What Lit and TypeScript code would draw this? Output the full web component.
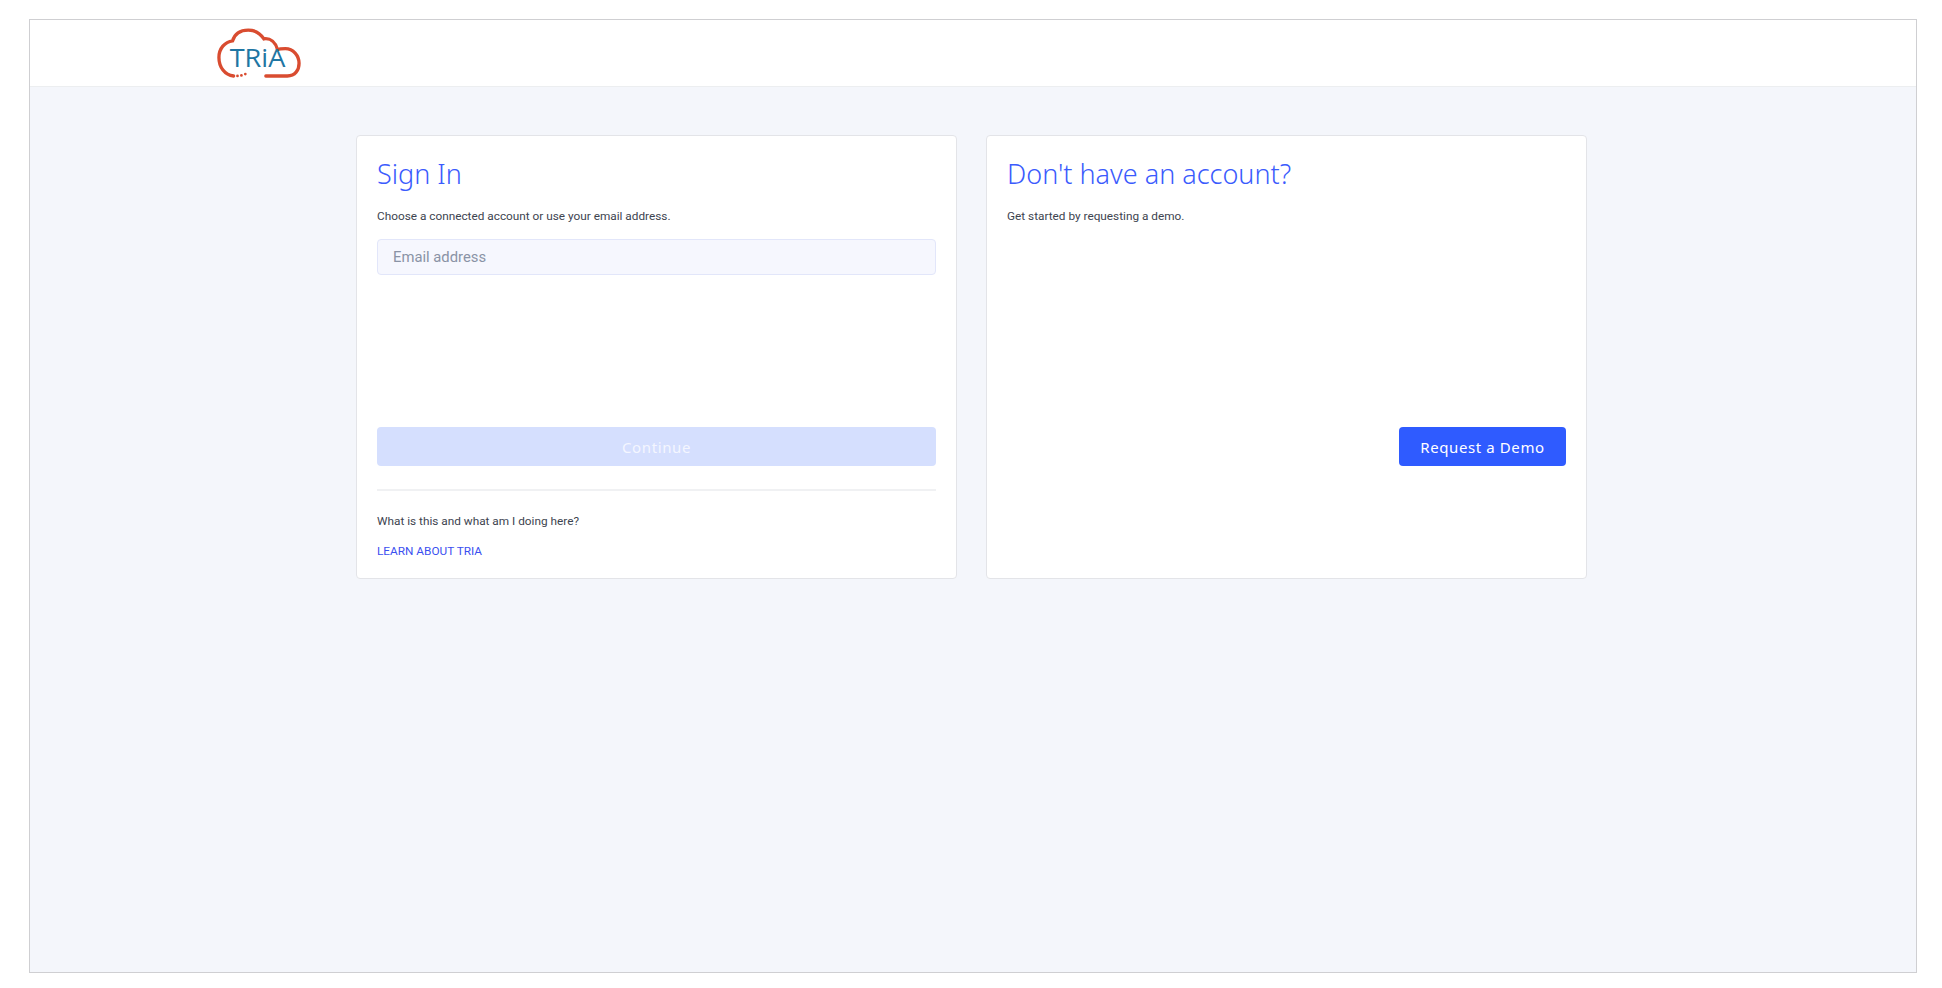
import { LitElement, html, css } from "lit";
import { customElement } from "lit/decorators.js";

@customElement("app-root")
export class AppRoot extends LitElement {
  static styles = css`
    :host {
      display: block;
      height: 988px;
      box-sizing: border-box;
      padding: 19px 25px 15px 29px;
      background: #fff;
      font-family: Roboto, "Liberation Sans", sans-serif;
    }
    .frame {
      height: 100%;
      box-sizing: border-box;
      border: 1px solid #cfcfd2;
      display: flex;
      flex-direction: column;
      background: #f4f6fb;
    }
    .header {
      height: 67px;
      flex: none;
      box-sizing: border-box;
      background: #fff;
      border-bottom: 1px solid #eceef0;
      padding: 6px 0 0 186px;
    }
    .logo {
      display: block;
      width: 86px;
      height: 55px;
    }
    .logo-text {
      font-family: "Open Sans", sans-serif;
      font-size: 26px;
      fill: #1f76a3;
    }
    .main {
      flex: 1;
      padding: 48px 0 0 326px;
      display: grid;
      grid-template-columns: 601px 601px;
      column-gap: 29px;
      align-content: start;
    }
    .card {
      box-sizing: border-box;
      height: 444px;
      background: #fff;
      border: 1px solid #e3e4e8;
      border-radius: 4px;
      padding: 19px 20px 20px 20px;
      display: flex;
      flex-direction: column;
    }
    h1 {
      margin: 0;
      font-family: "Noto Sans", "Open Sans", sans-serif;
      font-weight: 300;
      font-size: 27px;
      line-height: 38px;
      color: #3b5bfd;
    }
    p {
      margin: 0;
      font-size: 11.8px;
      line-height: 16px;
      color: #3d4450;
    }
    .lead {
      margin-top: 15px;
    }
    .input {
      margin-top: 15px;
      height: 36px;
      flex: none;
      box-sizing: border-box;
      background: #f6f7fe;
      border: 1px solid #e2e6fa;
      border-radius: 4px;
      padding: 0 15px;
      display: flex;
      align-items: center;
      font-size: 14.8px;
      color: #8a93a6;
    }
    .btn {
      height: 39px;
      flex: none;
      box-sizing: border-box;
      border-radius: 4px;
      display: flex;
      align-items: center;
      justify-content: center;
      font-family: "Noto Sans", "Open Sans", sans-serif;
      font-size: 15px;
      letter-spacing: 0.6px;
      color: #fff;
    }
    .continue {
      margin-top: 152px;
      background: #d5dffe;
      color: #f4f6ff;
    }
    .divider {
      margin-top: 23px;
      height: 2px;
      flex: none;
      background: #f0f1f3;
    }
    .what {
      margin-top: 22px;
    }
    .learn {
      margin-top: 14px;
      font-size: 11.8px;
      line-height: 16px;
      color: #3b50f0;
      text-decoration: none;
    }
    .right-action {
      margin-top: 203px;
      display: flex;
      justify-content: flex-end;
    }
    .demo {
      width: 167px;
      background: #2f5bff;
    }
  `;

  render() {
    return html`
      <div class="frame">
        <header class="header">
          <svg class="logo" viewBox="14 10 88 56" aria-label="TRiA logo">
            <path
              d="M65 61 H87 C95 61 99 55 99 48 C99 40 93 33 85 33 C82 33 79 33 77 34 C75 27 70 22 63 23 C59 17 53 14 47 14 C39 14 33 18 31 25 C23 26 17 33 17 42 C17 52 23 60 32 61"
              fill="none"
              stroke="#d94c30"
              stroke-width="3.4"
              stroke-linecap="round"
            />
            <circle cx="36" cy="61" r="1.4" fill="#d94c30" />
            <circle cx="40" cy="60.5" r="1.4" fill="#d94c30" />
            <circle cx="44" cy="59" r="1.4" fill="#d94c30" />
            <text class="logo-text" x="28" y="52" textLength="57" lengthAdjust="spacingAndGlyphs">TRiA</text>
          </svg>
        </header>
        <main class="main">
          <section class="card">
            <h1>Sign In</h1>
            <p class="lead">Choose a connected account or use your email address.</p>
            <div class="input">Email address</div>
            <div class="btn continue">Continue</div>
            <div class="divider"></div>
            <p class="what">What is this and what am I doing here?</p>
            <a class="learn" href="#">LEARN ABOUT TRIA</a>
          </section>
          <section class="card">
            <h1>Don't have an account?</h1>
            <p class="lead">Get started by requesting a demo.</p>
            <div class="right-action">
              <div class="btn demo">Request a Demo</div>
            </div>
          </section>
        </main>
      </div>
    `;
  }
}
